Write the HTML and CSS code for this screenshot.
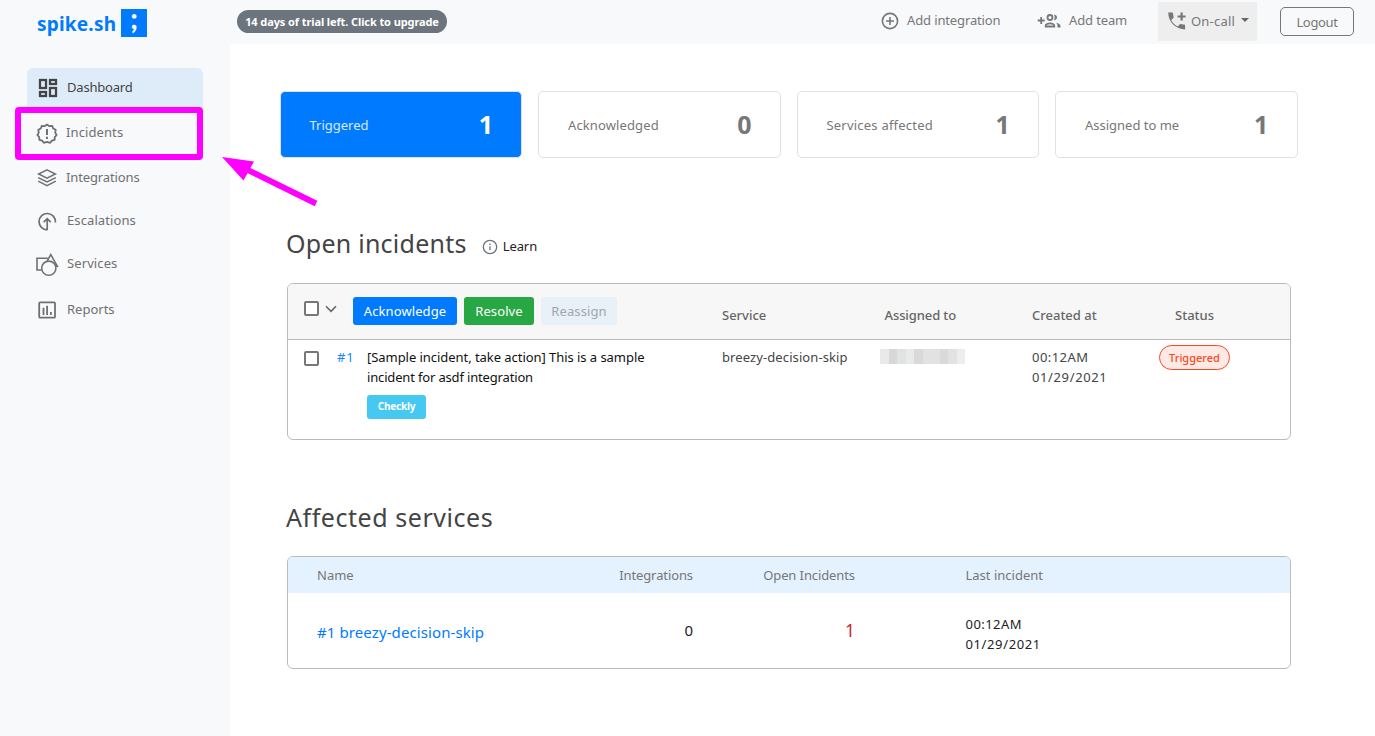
FILE: index.html
```html
<!DOCTYPE html>
<html lang="en">
<head>
<meta charset="utf-8">
<title>Dashboard - spike.sh</title>
<link rel="stylesheet" href="styles.css">
</head>
<body>
<div class="app">
  <aside class="sidebar">
    <a class="logo"><span class="logo-name">spike.sh</span><span class="logo-mark">;</span></a>
    <nav class="nav">
      <a class="nav-item nav-dashboard active">
        <svg class="icon" width="24" height="24" viewBox="0 0 24 24"><path fill="currentColor" stroke="currentColor" stroke-width=".3" d="M19 5v2h-4V5h4M9 5v6H5V5h4m10 8v6h-4v-6h4M9 17v2H5v-2h4M21 3h-8v6h8V3zM11 3H3v10h8V3zm10 8h-8v10h8V11zm-10 4H3v6h8v-6z"/></svg>
        <span class="t-dashboard">Dashboard</span>
      </a>
      <a class="nav-item nav-incidents">
        <svg class="icon" width="22" height="22" viewBox="0 0 22 22" fill="none" stroke="currentColor" stroke-width="1.8" stroke-linejoin="round"><path d="M11 1.600 13.400 3.200 16.200 2.900 17.200 5.500 19.700 6.800 19.200 9.600 20.600 12 18.800 14.100 18.600 16.900 15.900 17.600 14.200 19.800 11 18.800 7.800 19.800 6.100 17.600 3.400 16.900 3.200 14.100 1.400 12 2.800 9.600 2.300 6.800 4.800 5.500 5.800 2.900 8.600 3.200Z"/><path d="M11 6v6M11 13.800v2.200" stroke-width="2"/></svg>
        <span class="t-incidents">Incidents</span>
      </a>
      <a class="nav-item nav-integrations">
        <svg class="icon" width="22" height="20" viewBox="0 0 22 20" fill="none" stroke="currentColor" stroke-width="1.500"><path d="M11 1.800 19.400 6 11 10.200 2.600 6Z"/><path d="M2.200 9.600 11 14l8.800-4.400M2.200 13.200 11 17.600l8.800-4.400"/></svg>
        <span class="t-integrations">Integrations</span>
      </a>
      <a class="nav-item nav-escalations">
        <svg class="icon" width="22" height="22" viewBox="0 0 22 22" fill="none" stroke="currentColor" stroke-width="1.700"><path d="M11.300 18.900A8.200 8.200 0 1 1 19.400 11.500"/><path d="M11.200 19V8M7.700 11.100 11.200 7.600l3.500 3.500"/></svg>
        <span class="t-escalations">Escalations</span>
      </a>
      <a class="nav-item nav-services">
        <svg class="icon" width="24" height="24" viewBox="0 0 24 24" fill="none" stroke="currentColor" stroke-width="1.600"><path d="M6.500 17H2V5.200h10.700M12.200 7.800 15.800 1.600 22.300 13.200h-2"/><circle cx="13.800" cy="15.200" r="7.100"/></svg>
        <span class="t-services">Services</span>
      </a>
      <a class="nav-item nav-reports">
        <svg class="icon" width="20" height="20" viewBox="0 0 20 20" fill="none" stroke="currentColor" stroke-width="1.800"><rect x="2.200" y="2.300" width="15.800" height="15.400" rx="1"/><path d="M6.500 15V7.800M10.100 15V5.800M13.900 15v-3"/></svg>
        <span class="t-reports">Reports</span>
      </a>
    </nav>
  </aside>

  <header class="topbar">
    <a class="trial">14 days of trial left. Click to upgrade</a>
    <div class="actions">
      <a class="action add-integration">
        <svg width="18" height="18" viewBox="0 0 18 18" fill="none" stroke="currentColor" stroke-width="1.600"><circle cx="9" cy="9" r="7.600"/><path d="M9 5v8M5 9h8"/></svg>
        <span>Add integration</span>
      </a>
      <a class="action add-team">
        <svg width="24" height="18" viewBox="0 0 24 18" fill="none" stroke="currentColor" stroke-width="1.800"><path d="M4.200 5v7M.7 8.500h7"/><circle cx="13" cy="5.500" r="2.500"/><path d="M8.700 14.500v-.8c0-1.300 2.300-2.400 4.300-2.400s4.300 1.100 4.300 2.400v.8Z"/><path d="M16.900 2.600c2.200.3 3.100 1.500 3.100 2.900s-.9 2.600-3.100 2.900c1.100-1.800 1.100-4 0-5.800ZM19.200 10.800c2.600.5 4.300 1.700 4.300 3.200v1.400h-3V13.800c0-1.100-.4-2.200-1.300-3Z" fill="currentColor" stroke="none"/></svg>
        <span>Add team</span>
      </a>
      <button class="oncall">
        <svg width="20" height="20" viewBox="0 0 20 20"><path fill="currentColor" d="M1.200 1.600h4.600l.9 4.900-2.500 2.400c1.500 3 3.500 5 6.500 6.500l2.400-2.500 5 .9v4.600C8.800 18.400 1.200 11 1.200 1.600z"/><path d="M14.600 1.500v8M10.600 5.500h8" stroke="currentColor" stroke-width="2.200"/></svg>
        <span>On-call</span><i class="caret"></i>
      </button>
      <button class="logout">Logout</button>
    </div>
  </header>

  <main class="main">
    <section class="cards">
      <div class="card selected"><span class="t-c1">Triggered</span><b>1</b></div>
      <div class="card"><span class="t-c2">Acknowledged</span><b>0</b></div>
      <div class="card"><span class="t-c3">Services affected</span><b>1</b></div>
      <div class="card"><span class="t-c4">Assigned to me</span><b>1</b></div>
    </section>

    <div class="heading open-heading">
      <h2>Open incidents</h2>
      <a class="learn">
        <svg width="16" height="16" viewBox="0 0 16 16" fill="none" stroke="#6c757d" stroke-width="1.300"><circle cx="8" cy="8" r="6.700"/><path d="M8 7.200v4M8 4.500v1.400"/></svg>
        <span>Learn</span>
      </a>
    </div>
    <section class="panel incidents">
      <div class="row head">
        <div class="tools">
          <i class="checkbox"></i>
          <svg class="chevron" width="14" height="9" viewBox="0 0 14 9" fill="none" stroke="#666" stroke-width="1.600"><path d="m2 1.300 5 5 5-5"/></svg>
          <button class="btn ack">Acknowledge</button>
          <button class="btn resolve">Resolve</button>
          <button class="btn reassign">Reassign</button>
        </div>
        <span class="th h-service">Service</span>
        <span class="th h-assigned">Assigned to</span>
        <span class="th h-created">Created at</span>
        <span class="th h-status">Status</span>
      </div>
      <div class="row body">
        <div class="summary">
          <i class="checkbox"></i>
          <a class="number">#1</a>
          <div class="detail">
            <p><span class="t-l1">[Sample incident, take action] This is a sample</span><br><span class="t-l2">incident for asdf integration</span></p>
            <span class="tag">Checkly</span>
          </div>
        </div>
        <span class="td t-service">breezy-decision-skip</span>
        <span class="redacted"></span>
        <span class="td"><span class="t-time">00:12AM</span><br><span class="t-date">01/29/2021</span></span>
        <span class="status">Triggered</span>
      </div>
    </section>

    <div class="heading affected-heading"><h2>Affected services</h2></div>
    <section class="panel affected">
      <div class="srow shead">
        <span class="t-name">Name</span><span class="num t-int">Integrations</span><span class="num t-open">Open Incidents</span><span class="last t-last">Last incident</span>
      </div>
      <div class="srow sbody">
        <a class="svc">#1 breezy-decision-skip</a><span class="num zero">0</span><span class="num one">1</span><span class="last"><span class="t-time">00:12AM</span><br><span class="t-date">01/29/2021</span></span>
      </div>
    </section>
  </main>
</div>
<div class="highlight"></div>
<svg class="arrow" width="100" height="56" viewBox="0 0 100 56"><path d="M28 14 95.500 49.500" transform="rotate(-1.500 60 30)" stroke="#f0f" stroke-width="6"/><path d="M2 2 34 6.500 23.500 25.500Z" fill="#f0f"/></svg>
</body>
</html>
```
FILE: styles.css
```css
* { box-sizing: border-box; }
body { margin: 0; background: #fff; color: #444; font: 13px/20px "Noto Sans", sans-serif; overflow: hidden; }
button { font: inherit; border: 0; margin: 0; padding: 0; }
h2, p { margin: 0; font-weight: 400; }
svg { display: block; flex: none; }
span { white-space: nowrap; }

.app { display: grid; grid-template: 44px 692px / 230px 1fr; }
.sidebar { grid-row: 1 / 3; background: #f8f9fb; }
.logo { display: flex; align-items: center; height: 28px; margin: 9px 0 0 37px; color: #007bff; font-weight: 700; }
.logo-name { width: 84px; font-size: 19px; line-height: 28px; padding-top: 2px; letter-spacing: .2px; }
.logo-mark { width: 26px; height: 28px; background: #007bff; color: #fff; font: 900 28px/18px Lato, sans-serif; text-align: center; }
.nav { margin-top: 31px; color: #707070; }
.nav-item { display: flex; align-items: center; width: 176px; margin-left: 27px; height: 40px; }
.nav-item span { margin-left: auto; width: 136px; padding-bottom: 2px; }
.nav-item .icon { margin-left: 9px; }
.nav-item .t-incidents, .nav-item .t-integrations { width: 137px; }
.nav-services .icon { margin-left: 8px; }
.nav-reports .icon { margin-left: 10px; }
.nav-incidents .icon, .nav-escalations .icon, .nav-services .icon { margin-top: 1.5px; }
.active { background: #deecf9; color: #444; border-radius: 6px 6px 0 0; }
.nav-incidents { height: 50px; }
.nav-escalations { height: 46px; }
.nav-reports { height: 52px; }
.t-dashboard { letter-spacing: -.2px; }
.t-incidents, .t-escalations, .t-services { letter-spacing: .1px; }
.t-integrations { letter-spacing: -.12px; }

.topbar { display: flex; align-items: flex-start; justify-content: space-between; background: #f8f9fb; color: #777; padding: 0 21px 0 7px; }
.trial { width: 210px; height: 23px; margin-top: 10px; border-radius: 12px; background: #6c757d; color: #fff; font-weight: 700; font-size: 11px; line-height: 23px; letter-spacing: -.1px; text-align: center; white-space: nowrap; }
.actions { display: flex; }
.action { display: flex; align-items: center; height: 42px; letter-spacing: -.13px; }
.add-integration { width: 156px; gap: 8px; }
.add-team { width: 121px; gap: 8px; }
.action span, .oncall span { padding-bottom: 2px; }
.oncall { display: flex; align-items: center; width: 99px; height: 39px; margin-top: 2px; padding-left: 9px; gap: 4px; background: #eee; color: #777; letter-spacing: .2px; }
.oncall svg { margin-bottom: 1px; }
.caret { border: 4px solid transparent; border-top-color: #666; border-bottom: 0; margin: 0 0 3px 2px; }
.logout { width: 74px; height: 29px; margin: 7px 0 0 23px; padding-top: 1px; border: 1px solid #777; border-radius: 5px; background: none; color: #777; letter-spacing: -.35px; }

.main { padding: 47px 77px 0 50px; }
.cards { display: grid; grid-template-columns: repeat(4, 1fr); gap: 16px; width: 1017.9px; height: 67px; }
.card { display: flex; align-items: center; justify-content: space-between; padding: 0 28.5px 0 28.5px; border: 1px solid #dee2e6; border-radius: 5px; color: #777; }
.card b { font-size: 25px; padding-bottom: 2px; }
.selected { background: #007bff; color: #fff; }
.selected span { color: #d9ebff; }
.t-c2 { letter-spacing: .12px; }
.t-c3 { letter-spacing: .22px; }
.heading { display: flex; align-items: center; height: 36px; margin-left: 6px; }
h2 { font-size: 25px; line-height: 36px; white-space: nowrap; letter-spacing: .25px; }
.open-heading { margin-top: 67px; }
.learn { display: flex; align-items: center; gap: 5px; margin: 6px 0 0 15px; color: #222; letter-spacing: -.1px; }
.learn svg { margin-top: 1.5px; }
.panel { width: 1004px; margin-left: 7px; border: 1px solid #bbb; border-radius: 6px; overflow: hidden; }
.incidents { height: 157px; margin-top: 22px; }
.row { display: grid; grid-template-columns: 434px 158px 152px 127px 1fr; }
.head { height: 56px; background: #f7f7f7; border-bottom: 1px solid #bbb; color: #666; }
.th { padding-top: 21px; font-weight: 500; }
.h-assigned { padding-left: 4.5px; letter-spacing: -.1px; }
.h-status { padding-left: 16px; }
.tools { display: flex; padding: 13px 0 0 16px; }
.checkbox { flex: none; width: 15px; height: 15px; border: 2px solid #777; border-radius: 2px; background: #fff; }
.tools .checkbox { margin-top: 4px; }
.chevron { margin: 8px 15px 0 5px; }
.btn { height: 28px; border-radius: 3px; color: #fff; margin-right: 7px; letter-spacing: .1px; }
.ack { width: 104px; background: #007bff; }
.resolve { width: 70px; background: #28a745; }
.reassign { width: 76px; background: #e8f0f8; color: #a0a7af; }
.body { padding-top: 7px; align-items: start; }
.summary { display: flex; padding-left: 16px; }
.summary .checkbox { margin-top: 4px; }
.number { width: 30px; margin-left: 18px; color: #1a86ff; letter-spacing: .8px; }
.detail { color: #111; }
.t-l1 { letter-spacing: -.05px; }
.t-l2 { letter-spacing: -.16px; }
.t-service { letter-spacing: .1px; }
.t-time { letter-spacing: .45px; }
.t-date { letter-spacing: .62px; }
.tag { display: block; width: 59px; height: 24px; margin-top: 8px; border-radius: 3px; background: #45c8f1; color: #fff; font-size: 10px; font-weight: 700; line-height: 23px; letter-spacing: -.2px; text-align: center; }
.redacted { width: 85px; height: 15px; margin-top: 2px; background: linear-gradient(90deg, #e9e9e9 9px, #d8d8d8 9px 17px, #e1e3e2 17px 26px, #e9e9e9 26px 34px, #d9d9d9 34px 43px, #e2e2e2 43px 60px, #dadada 60px 68px, #e2e2e2 68px 77px, #ededed 77px); }
.status { width: 71px; height: 25px; margin-top: -2px; border: 1px solid #f64a24; border-radius: 13px; background: #ffe9e5; color: #f64a24; font-size: 11px; font-weight: 500; line-height: 24px; text-align: center; }

.affected-heading { margin-top: 59px; }
.affected-heading h2 { letter-spacing: .55px; }
.affected { height: 113px; margin-top: 21px; }
.srow { display: grid; grid-template-columns: 300px 76px 162px 1fr; padding-left: 29px; }
.shead { height: 36px; background: #e4f1fe; color: #777; line-height: 37px; }
.num { justify-self: end; }
.t-int, .t-open { letter-spacing: -.1px; }
.last { margin-left: 110.5px; }
.sbody { height: 75px; align-items: center; color: #222; }
.svc { color: #007bff; font-size: 15px; padding-top: 2px; letter-spacing: .1px; white-space: nowrap; }
.zero { font-size: 15px; padding-bottom: 2px; }
.one { font-size: 17.5px; color: #c82a35; padding-bottom: 2px; }
.sbody .last { padding-top: 6px; }

/* Guide annotation over the page */
.highlight { position: absolute; left: 15px; top: 107px; width: 188px; height: 53px; border: 6px solid #f0f; border-radius: 4px; }
.arrow { position: absolute; left: 220px; top: 155px; }
```
